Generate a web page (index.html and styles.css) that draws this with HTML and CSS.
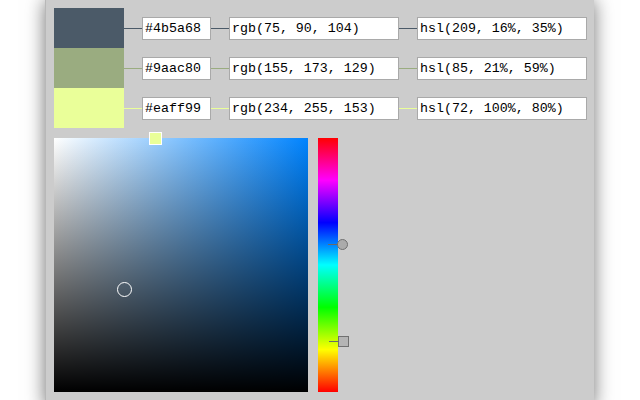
FILE: index.html
```html
<!DOCTYPE html>
<html lang="en">
<head>
    <meta charset="UTF-8">
    <title>Color picker</title>
    <link rel="stylesheet" href="styles.css">
</head>
<body>
    <div class="panel">
        <div class="color-row">
            <div class="swatch" style="background: #4b5a68;"></div>
            <div class="link" style="background: #4b5a68;"></div>
            <input class="field hex" type="text" value="#4b5a68">
            <div class="link" style="background: #4b5a68;"></div>
            <input class="field wide" type="text" value="rgb(75, 90, 104)">
            <div class="link" style="background: #4b5a68;"></div>
            <input class="field wide" type="text" value="hsl(209, 16%, 35%)">
        </div>
        <div class="color-row">
            <div class="swatch" style="background: #9aac80;"></div>
            <div class="link" style="background: #9aac80;"></div>
            <input class="field hex" type="text" value="#9aac80">
            <div class="link" style="background: #9aac80;"></div>
            <input class="field wide" type="text" value="rgb(155, 173, 129)">
            <div class="link" style="background: #9aac80;"></div>
            <input class="field wide" type="text" value="hsl(85, 21%, 59%)">
        </div>
        <div class="color-row">
            <div class="swatch" style="background: #eaff99;"></div>
            <div class="link" style="background: #eaff99;"></div>
            <input class="field hex" type="text" value="#eaff99">
            <div class="link" style="background: #eaff99;"></div>
            <input class="field wide" type="text" value="rgb(234, 255, 153)">
            <div class="link" style="background: #eaff99;"></div>
            <input class="field wide" type="text" value="hsl(72, 100%, 80%)">
        </div>

        <div class="picker">
            <div class="sv-box" style="--hue: 209;">
                <div class="sv-square" style="left: 101px; top: 0; background: #eaff99;"></div>
                <div class="sv-circle" style="left: 70px; top: 151px;"></div>
            </div>
            <div class="hue-bar">
                <div class="hue-knob round" style="top: 106px;"></div>
                <div class="hue-knob square" style="top: 203px;"></div>
            </div>
        </div>
    </div>
</body>
</html>
```

FILE: styles.css
```css
body {
    margin: 0;
    padding: 0;
    background-color: #ffffff;
    overflow: hidden;
    font-family: "Liberation Mono", "DejaVu Sans Mono", monospace;
}
.panel {
    width: 533px;
    height: 400px;
    margin-left: 45px;
    padding: 8px 7px 0 8px;
    background-color: #cccccc;
    border-left: 1px solid #b8b8b8;
    box-sizing: content-box;
    box-shadow: 0 0 18px rgba(0, 0, 0, 0.55);
}
.color-row {
    display: flex;
    align-items: center;
    height: 40px;
}
.color-row > * {
    flex-shrink: 0;
}
.swatch {
    width: 70px;
    height: 40px;
}
.link {
    width: 18px;
    height: 1px;
}
.field {
    height: 23px;
    box-sizing: border-box;
    margin: 0;
    padding: 0 2px;
    border: 1px solid #a9a9a9;
    border-radius: 0;
    background: #ffffff;
    color: #000000;
    font-family: "Liberation Mono", "DejaVu Sans Mono", monospace;
    font-size: 13.3px;
    outline: none;
}
.hex {
    width: 69px;
}
.wide {
    width: 170px;
}
.picker {
    display: flex;
    gap: 10px;
    margin-top: 10px;
}
.sv-box {
    position: relative;
    width: 254px;
    height: 254px;
    background:
        linear-gradient(to top, #000000, rgba(0, 0, 0, 0)),
        linear-gradient(to right, #ffffff, hsl(var(--hue), 100%, 50%));
}
.sv-square {
    position: absolute;
    width: 11px;
    height: 11px;
    margin: -6px 0 0 -6px;
    border: 1px solid #ffffff;
}
.sv-circle {
    position: absolute;
    width: 13px;
    height: 13px;
    margin: -7px 0 0 -7px;
    border: 1px solid #ffffff;
    border-radius: 50%;
}
.hue-bar {
    position: relative;
    width: 20px;
    height: 254px;
    background: linear-gradient(to bottom, #ff0000, #ff00ff, #0000ff, #00ffff, #00ff00, #ffff00, #ff0000);
}
.hue-knob {
    position: absolute;
    left: 20px;
    background: #ababab;
    border: 1px solid #707070;
    box-sizing: border-box;
}
.hue-knob::before {
    content: "";
    position: absolute;
    right: 100%;
    top: 50%;
    width: 10px;
    height: 1px;
    margin-top: -1px;
    background: #6a6a6a;
}
.hue-knob.round {
    width: 11px;
    height: 11px;
    margin-top: -5px;
    left: 19px;
    border-radius: 50%;
}
.hue-knob.square {
    width: 11px;
    height: 11px;
    margin-top: -5px;
    background: #b4b4b4;
}
```
